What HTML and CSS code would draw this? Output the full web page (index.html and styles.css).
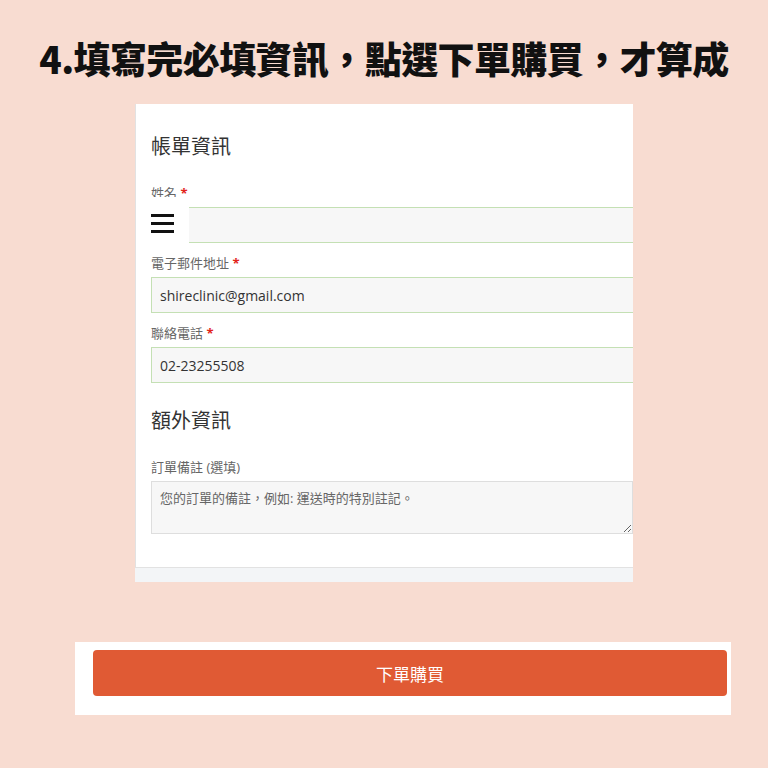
FILE: index.html
```html
<!DOCTYPE html>
<html>
  <head>
    <title>填寫必填資訊</title>
    <link rel="stylesheet" href="styles.css">
  </head>
  <body>
    <h1 class="title">4.填寫完必填資訊，點選下單購買，才算成</h1>

    <div class="shot">
      <div class="panel">
        <h3 class="section">帳單資訊</h3>
        <div class="field">
          <label>姓名 <span class="req">*</span></label>
          <input class="input" type="text" value=""/>
        </div>
        <div class="field">
          <label>電子郵件地址 <span class="req">*</span></label>
          <input class="input" type="email" value="shireclinic@gmail.com"/>
        </div>
        <div class="field">
          <label>聯絡電話 <span class="req">*</span></label>
          <input class="input" type="tel" value="02-23255508"/>
        </div>

        <h3 class="section extra">額外資訊</h3>
        <div class="field">
          <label>訂單備註 (選填)</label>
          <textarea class="notes" placeholder="您的訂單的備註，例如: 運送時的特別註記。"></textarea>
        </div>
      </div>
      <div class="band"></div>

      <div class="menu">
        <span></span><span></span><span></span>
      </div>
    </div>

    <div class="order">
      <button class="order-btn">下單購買</button>
    </div>
  </body>
</html>
```

FILE: styles.css
```css
/* page */
body {
  margin: 0;
  background: #f8dcd1;
  font-family: "Open Sans", "Noto Sans CJK TC", sans-serif;
}

.title {
  margin: 0 0 24px;
  padding-top: 36px;
  line-height: 44px;
  font-size: 37px;
  font-weight: 900;
  font-family: "Noto Sans CJK TC", sans-serif;
  color: #111;
  text-align: center;
  letter-spacing: -0.6px;
}

/* screenshot of the checkout form */
.shot {
  position: relative;
  width: 498px;
  margin: 0 auto;
  background: #fff;
  overflow: hidden;
}

.panel {
  padding: 28px 0 23px 15px;
  border-left: 1px solid #e2e2e2;
  border-bottom: 1px solid #e2e2e2;
}

.band { height: 14px; background: #f3f5f7; }

.section {
  margin: 0 0 23px;
  font-size: 20px;
  line-height: 28px;
  font-weight: 400;
  color: #333;
  font-family: "Noto Sans CJK TC", sans-serif;
}
.section.extra { margin-top: 23px; }

.field { margin-bottom: 10px; }
.field label {
  display: block;
  margin-bottom: 4px;
  font-size: 13px;
  line-height: 20px;
  color: #666;
  font-family: "Open Sans", "Noto Sans CJK TC", sans-serif;
}
.req { color: #e2231a; font-weight: 700; }

.input {
  display: block;
  box-sizing: border-box;
  width: calc(100% + 20px);
  height: 36px;
  padding: 0 8px;
  border: 1px solid #c4e0b4;
  background: #f7f7f7;
  font: 14px "Open Sans", sans-serif;
  color: #333;
  outline: none;
}

.notes {
  display: block;
  box-sizing: border-box;
  width: 100%;
  height: 53px;
  padding: 6px 8px;
  border: 1px solid #dedede;
  background: #f7f7f7;
  font: 13px/20px "Open Sans", "Noto Sans CJK TC", sans-serif;
  color: #333;
}
.notes::placeholder { color: #666; }

/* menu button sitting over the form */
.menu {
  position: absolute;
  left: 1px;
  top: 93px;
  width: 53px;
  height: 53px;
  background: #fff;
  display: flex;
  flex-direction: column;
  justify-content: center;
  gap: 5px;
  padding-left: 15px;
  box-sizing: border-box;
}
.menu span { display: block; width: 23px; height: 3px; background: #111; }

/* order button */
.order {
  width: 656px;
  margin: 60px 0 0 75px;
  padding: 8px 4px 19px 18px;
  box-sizing: border-box;
  background: #fff;
}
.order-btn {
  display: block;
  width: 100%;
  height: 46px;
  border: none;
  border-radius: 4px;
  background: #e05a34;
  color: #fff;
  font: 17px "Noto Sans CJK TC", sans-serif;
}
```
